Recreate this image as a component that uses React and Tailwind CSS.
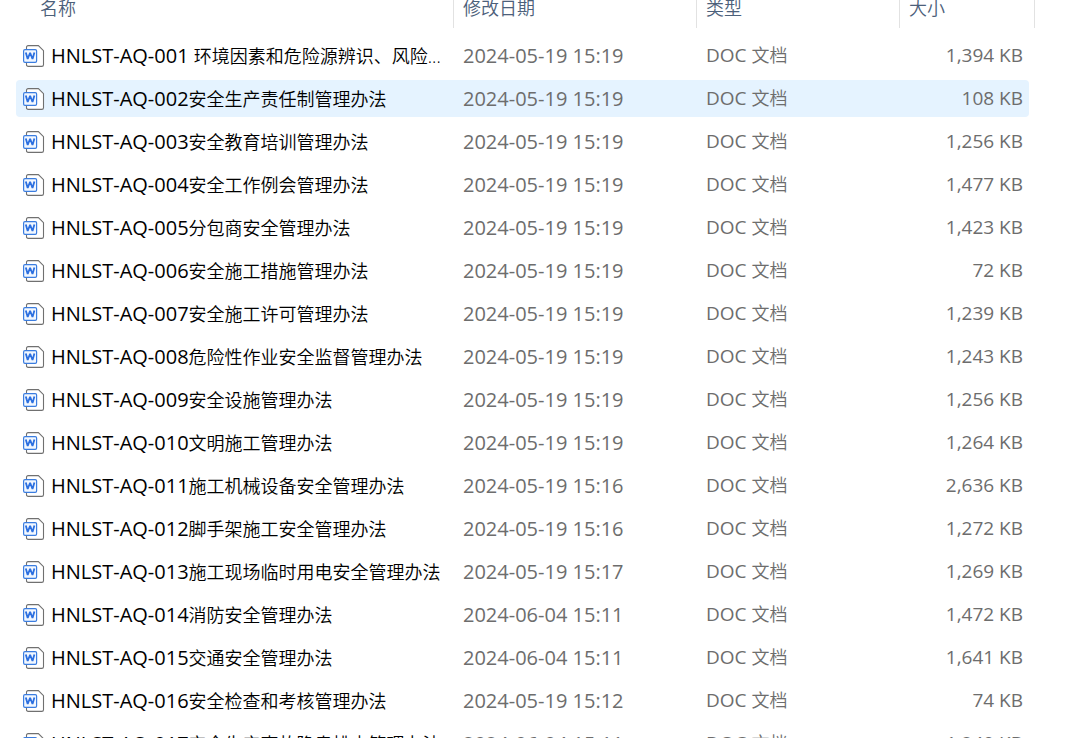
import React from "react";

const files = [
  { name: "HNLST-AQ-001 环境因素和危险源辨识、风险...", date: "2024-05-19 15:19", size: "1,394 KB" },
  { name: "HNLST-AQ-002安全生产责任制管理办法", date: "2024-05-19 15:19", size: "108 KB", active: true },
  { name: "HNLST-AQ-003安全教育培训管理办法", date: "2024-05-19 15:19", size: "1,256 KB" },
  { name: "HNLST-AQ-004安全工作例会管理办法", date: "2024-05-19 15:19", size: "1,477 KB" },
  { name: "HNLST-AQ-005分包商安全管理办法", date: "2024-05-19 15:19", size: "1,423 KB" },
  { name: "HNLST-AQ-006安全施工措施管理办法", date: "2024-05-19 15:19", size: "72 KB" },
  { name: "HNLST-AQ-007安全施工许可管理办法", date: "2024-05-19 15:19", size: "1,239 KB" },
  { name: "HNLST-AQ-008危险性作业安全监督管理办法", date: "2024-05-19 15:19", size: "1,243 KB" },
  { name: "HNLST-AQ-009安全设施管理办法", date: "2024-05-19 15:19", size: "1,256 KB" },
  { name: "HNLST-AQ-010文明施工管理办法", date: "2024-05-19 15:19", size: "1,264 KB" },
  { name: "HNLST-AQ-011施工机械设备安全管理办法", date: "2024-05-19 15:16", size: "2,636 KB" },
  { name: "HNLST-AQ-012脚手架施工安全管理办法", date: "2024-05-19 15:16", size: "1,272 KB" },
  { name: "HNLST-AQ-013施工现场临时用电安全管理办法", date: "2024-05-19 15:17", size: "1,269 KB" },
  { name: "HNLST-AQ-014消防安全管理办法", date: "2024-06-04 15:11", size: "1,472 KB" },
  { name: "HNLST-AQ-015交通安全管理办法", date: "2024-06-04 15:11", size: "1,641 KB" },
  { name: "HNLST-AQ-016安全检查和考核管理办法", date: "2024-05-19 15:12", size: "74 KB" },
  { name: "HNLST-AQ-017安全生产事故隐患排查管理办法", date: "2024-06-04 15:11", size: "1,240 KB" },
];

const WordIcon = () => (
  <svg className="w-[22px] h-[22px] shrink-0" viewBox="0 0 22 22" fill="none" aria-hidden="true">
    <path
      d="M3.5 4.5V2.3Q3.5.6 5.2.6H15.4L20.5 5.7V19.7Q20.5 21.4 18.8 21.4H5.2Q3.5 21.4 3.5 19.7V17"
      fill="#fff"
      stroke="#707070"
      strokeWidth="1.1"
    />
    <rect x="0.6" y="4.6" width="13" height="12.8" rx="1.4" fill="#f1f7ff" stroke="#3b7de0" strokeWidth="1.2" />
    <path
      d="M2.8 7.4L4.7 14L7.1 7.8L9.5 14L11.4 7.4"
      stroke="#2b6fe0"
      strokeWidth="1.8"
      strokeLinejoin="bevel"
    />
  </svg>
);

// Latin runs are set a little larger than the Chinese ones
const FileName = ({ children }) => {
  const [, latin, rest] = children.match(/^([\x20-\x7e]*)(.*)$/);
  return (
    <span className="truncate text-[18px]">
      <span className="text-[20px] font-normal">{latin}</span>
      {rest}
    </span>
  );
};

const App = () => {
  return (
    <div className="h-screen overflow-hidden bg-white pl-4 pr-[30px] font-[350] font-['Open_Sans','Noto_Sans_CJK_SC',sans-serif]">
      <table className="w-full table-fixed border-collapse">
        <colgroup>
          <col />
          <col className="w-[243px]" />
          <col className="w-[203px]" />
          <col className="w-[135px]" />
        </colgroup>
        <thead>
          <tr className="text-left text-[18px] leading-4 text-[#4c607a]">
            <th className="p-0 pb-[6px] font-[350]">
              <div className="h-[28px] border-r border-[#e2e2e2] pl-6">名称</div>
            </th>
            <th className="p-0 pb-[6px] font-[350]">
              <div className="h-[28px] border-r border-[#e2e2e2] pl-[9px]">修改日期</div>
            </th>
            <th className="p-0 pb-[6px] font-[350]">
              <div className="h-[28px] border-r border-[#e2e2e2] pl-[9px]">类型</div>
            </th>
            <th className="p-0 pb-[6px] font-[350]">
              <div className="h-[28px] border-r border-[#e2e2e2] pl-[9px]">大小</div>
            </th>
          </tr>
        </thead>
        <tbody>
          {files.map((file) => {
            const bg = file.active ? "bg-[#e5f3ff]" : "";
            return (
              <tr key={file.name} className="text-[#6d6d6d]">
                <td className="p-0 py-[3px]">
                  <div className={`flex h-[37px] items-center gap-[6px] rounded-l-sm pl-[7px] text-black ${bg}`}>
                    <WordIcon />
                    <FileName>{file.name}</FileName>
                  </div>
                </td>
                <td className="p-0 py-[3px]">
                  <div className={`flex h-[37px] items-center pl-[9px] text-[20px] font-normal ${bg}`}>{file.date}</div>
                </td>
                <td className="p-0 py-[3px]">
                  <div className={`flex h-[37px] items-center pl-[9px] text-[18px] ${bg}`}>
                    <span>
                      <span className="text-[19px] font-normal">DOC </span>文档
                    </span>
                  </div>
                </td>
                <td className="p-0 py-[3px]">
                  <div className={`mr-[6px] flex h-[37px] items-center justify-end rounded-r-sm pr-[6px] text-[19px] font-normal ${bg}`}>
                    {file.size}
                  </div>
                </td>
              </tr>
            );
          })}
        </tbody>
      </table>
    </div>
  );
};

export default App;
